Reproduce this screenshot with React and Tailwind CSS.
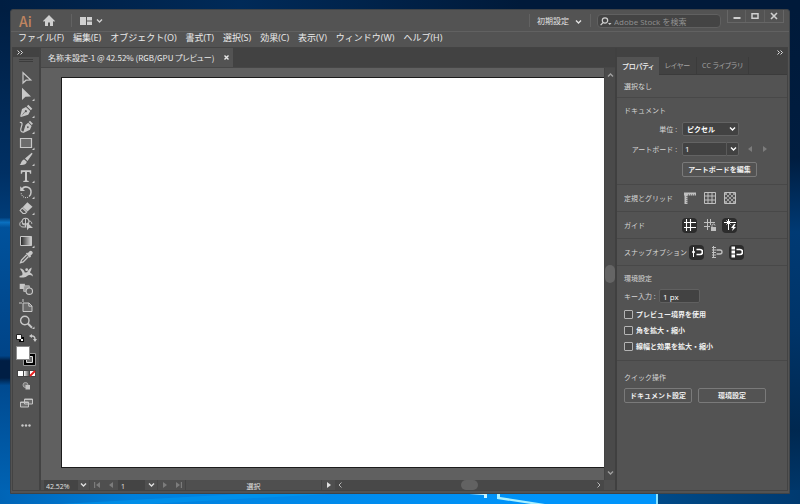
import React from "react";

const MENUS = ["ファイル(F)", "編集(E)", "オブジェクト(O)", "書式(T)", "選択(S)", "効果(C)", "表示(V)", "ウィンドウ(W)", "ヘルプ(H)"];

function Wallpaper() {
  return (
    <svg className="absolute inset-0 h-full w-full" viewBox="0 0 800 504" preserveAspectRatio="none" aria-hidden="true">
      <defs>
        <linearGradient id="top" x1="0" x2="1">
          <stop offset="0" stopColor="#001e42" />
          <stop offset="0.3" stopColor="#002a58" />
          <stop offset="0.65" stopColor="#001a3a" />
          <stop offset="1" stopColor="#001a3a" />
        </linearGradient>
        <linearGradient id="left" x1="0" x2="0" y1="0" y2="1">
          <stop offset="0" stopColor="#001e42" />
          <stop offset="0.33" stopColor="#003064" />
          <stop offset="0.42" stopColor="#003c78" />
          <stop offset="0.43" stopColor="#0a70c0" />
          <stop offset="0.44" stopColor="#00529c" />
          <stop offset="0.7" stopColor="#004488" />
          <stop offset="0.71" stopColor="#001e44" />
          <stop offset="0.745" stopColor="#001e44" />
          <stop offset="0.76" stopColor="#004a90" />
          <stop offset="1" stopColor="#0066b8" />
        </linearGradient>
        <linearGradient id="right" x1="0" x2="0" y1="0" y2="1">
          <stop offset="0" stopColor="#001a3a" />
          <stop offset="0.3" stopColor="#001d40" />
          <stop offset="0.45" stopColor="#003a74" />
          <stop offset="0.65" stopColor="#003468" />
          <stop offset="0.85" stopColor="#002850" />
          <stop offset="1" stopColor="#003a70" />
        </linearGradient>
        <linearGradient id="bottom" x1="0" x2="1">
          <stop offset="0" stopColor="#0064b6" />
          <stop offset="0.2" stopColor="#0080dc" />
          <stop offset="0.45" stopColor="#0088e8" />
          <stop offset="0.82" stopColor="#0094fa" />
        </linearGradient>
        <linearGradient id="bottomRight" x1="0" x2="1">
          <stop offset="0" stopColor="#004a88" />
          <stop offset="1" stopColor="#003a70" />
        </linearGradient>
      </defs>
      <rect width="800" height="504" fill="url(#top)" />
      <rect y="10" width="40" height="494" fill="url(#left)" />
      <rect x="760" y="10" width="40" height="494" fill="url(#right)" />
      <rect y="490" width="658" height="14" fill="url(#bottom)" />
      <rect x="658" y="490" width="142" height="14" fill="url(#bottomRight)" />
      <path d="M150 504L330 494H240L60 504Z" fill="#009cf4" opacity="0.5" />
      <path d="M455 493h32v5h-3v-3z" fill="#c8f4ff" />
      <path d="M497 493h3v4l45 7h-14l-34-5z" fill="#a8f0ff" />
      <rect x="656" y="490" width="2" height="14" fill="#8ce4ff" />
    </svg>
  );
}

function Chevron({ className = "" }) {
  return (
    <svg className={"h-[6px] w-[7px] " + className} viewBox="0 0 7 6" fill="none" stroke="currentColor" strokeWidth="1.4" aria-hidden="true">
      <path d="M1 1.6L3.5 4L6 1.6" />
    </svg>
  );
}

function TitleBar() {
  return (
    <header className="flex h-[21px] items-center pl-2 pr-[5px]">
      <span className="w-[12px] font-['Noto_Sans_CJK_JP',sans-serif] text-[14px] font-medium leading-none text-[#c08560]">Ai</span>
      <button aria-label="ホーム" className="ml-3 text-[#cfcfcf]">
        <svg className="h-[11px] w-[12px]" viewBox="0 0 12 11" fill="currentColor"><path d="M6 0L0 6l.9.8L2 5.9V11h3V7.5h2V11h3V5.9l1.100.9L12 6z" /></svg>
      </button>
      <span className="ml-4 h-[13px] w-px bg-[#626262]" />
      <button aria-label="ドキュメントレイアウト" className="ml-2 flex items-center gap-1 text-[#d0d0d0]">
        <svg className="h-[8px] w-[12px]" viewBox="0 0 12 8" fill="currentColor"><path d="M0 0h6v8H0zM7 0h5v3.5H7zM7 4.500h5V8H7z" /></svg>
        <Chevron />
      </button>
      <span className="ml-auto h-[13px] w-px bg-[#626262]" />
      <button className="ml-[7px] flex items-center gap-[6px] text-[8px] leading-none text-[#e2e2e2]">初期設定<Chevron className="mt-[3px]" /></button>
      <span className="ml-2 h-[13px] w-px bg-[#626262]" />
      <label className="ml-[6px] mt-px flex h-[14px] w-[124px] items-center rounded-sm border border-[#606060] bg-[#444444] pl-[2px]">
        <svg className="h-[9px] w-[12px] shrink-0 text-[#d0d0d0]" viewBox="0 0 12 9" fill="none" stroke="currentColor" strokeWidth="1.2" aria-hidden="true">
          <circle cx="5" cy="3.500" r="2.700" /><path d="M3.100 5.500L.6 8.200" /><path d="M8 6h3.500L9.750 8z" fill="currentColor" stroke="none" />
        </svg>
        <input aria-label="Adobe Stock を検索" placeholder="Adobe Stock を検索" className="ml-[2px] h-full w-full min-w-0 bg-transparent text-[8px] leading-none outline-none placeholder:text-[#929292]" />
      </label>
      <div className="ml-[6px] flex h-[13px] self-start border-x border-b border-[#666666] text-[#d0d0d0]">
        <button aria-label="最小化" className="grid w-[18px] place-items-center border-r border-[#606060]"><svg className="h-[8px] w-[8px]" viewBox="0 0 8 8"><path d="M.5 5h7v2h-7z" fill="currentColor" /></svg></button>
        <button aria-label="最大化" className="grid w-[19px] place-items-center border-r border-[#606060]"><svg className="h-[8px] w-[8px]" viewBox="0 0 8 8"><path d="M1 1.700h6v4.600H1z" fill="none" stroke="currentColor" strokeWidth="1.500" /></svg></button>
        <button aria-label="閉じる" className="grid w-[18px] place-items-center"><svg className="h-[8px] w-[8px]" viewBox="0 0 8 8"><path d="M1 1l6 6M7 1L1 7" fill="none" stroke="currentColor" strokeWidth="1.600" /></svg></button>
      </div>
    </header>
  );
}

const TOOLS = [
  ["選択ツール", false, <path d="M4 1.700v10.300l3-2.800 4.800-.2z" fill="none" stroke="currentColor" strokeWidth="1.200" />],
  ["ダイレクト選択ツール", true, <path d="M3 .8v12.200l3.500-3.200 5.500-.3z" />],
  ["ペンツール", true, <path fillRule="evenodd" d="M9.300.8l4 4-1.500 1.500-4-4zM7 2.900l4.200 4.200-2 3.600L2 13l-.8-.8L3 5zM6.800 6.100a1.100 1.100 0 1 0 .1 0zM2.200 12.300l3.600-3.800-.5-.4z" />],
  ["曲線ツール", true, <><path fillRule="evenodd" d="M11 .8l3 3-1.300 1.300-3-3zM9.200 2.700l3.400 3.300-1.600 3.700-6.200 3-.5-.5L6.500 5zM8.800 6.200a.9.900 0 1 0 .1 0z" /><path d="M.8 2.500C3.500 2 3.500 4 2.300 7S1.500 12.500 5 12" fill="none" stroke="currentColor" strokeWidth="1.200" /></>],
  ["長方形ツール", true, <path d="M1.500 2.500h11v9h-11z" fill="#6c6c6c" stroke="currentColor" strokeWidth="1.200" />],
  ["ブラシツール", true, <path d="M12.700.8l.9.9L8.500 9 6 6.600zM5.300 7.400l2.500 2.300C7.500 12.500 4 13.500.5 12.800c2-.8 1.500-5 4.800-5.400z" />],
  ["文字ツール", true, <path d="M1.800 1.300h10.400v3.500H11L10.500 3H8v8.500l1.700.4v1H4.300v-1l1.700-.4V3H3.500L3 4.800H1.800z" />],
  ["回転ツール", true, <><path d="M3 4a5 5 0 0 1 9 3.500a5 5 0 0 1-2 4" fill="none" stroke="currentColor" strokeWidth="1.500" /><path d="M1.200 1.300v4.700H6z" /><path d="M9 12.300A5 5 0 0 1 2.200 8" fill="none" stroke="currentColor" strokeWidth="1.100" strokeDasharray="1 1" /></>],
  ["消しゴムツール", true, <><path d="M8.300 1.200l5.200 4.500-5 4.900L3.700 6.200z" /><path d="M3.300 7L7.700 11 6.200 12.500H4L1.100 9.500z" fill="none" stroke="currentColor" strokeWidth="1.100" /></>],
  ["シェイプ形成ツール", false, <><circle cx="6.500" cy="4.600" r="3.400" fill="none" stroke="currentColor" strokeWidth="1.100" /><path d="M3 4C-.3 5.500.2 10 4 10h3.500M3 6.800h6.500M6.500 1.500V10M10 4c2 0 2.800 1.200 2.800 2.800" fill="none" stroke="currentColor" /><path d="M8 5.200v8l2-2.200h4z" /></>],
  ["グラデーションツール", true, <path d="M1.500 2.500h11v9h-11z" fill="url(#toolGradient)" stroke="currentColor" />],
  ["スポイトツール", false, <><path d="M8.700 3.200l1.800-1.900a2 2 0 0 1 2.800 2.800l-1.800 1.700.6.700-1.400 1.200L6.900 3.500l1.200-1z" /><path d="M7.700 4.700L2.500 10 1.500 12.700 4.200 12 9.500 6.500" fill="none" stroke="currentColor" strokeWidth="1.300" /></>],
  ["パペットワープツール", false, <><path d="M.8 2.500c3 0 4.500 2 5 4l2.200-.3C9 5 9.500 3 12.500 1.500c.5 2-1 3-1.500 5 1.500 1 3 1.500 2.800 4-2-1.800-4-1.800-6-.3-2.300 1.600-4.800 1.700-7.500 1l.5-1.400C3 10 3.500 9 3.500 7.800 3.300 5.500 1.800 4.500.8 2.500z" /><circle cx="7.700" cy="3.700" r="1.400" /></>],
  ["ブレンドツール", false, <><path d="M.7 1.800h5.200v5.200H.7z" /><path d="M4.700 3.800h5.600v5.600H4.700z" fill="#969696" stroke="currentColor" strokeWidth=".8" /><circle cx="10.300" cy="9.200" r="3.200" fill="#5c5c5c" stroke="currentColor" strokeWidth="1.100" /></>],
  ["アートボードツール", false, <><path d="M4 4h6l3 3v5.500H4z" fill="#6a6a6a" stroke="currentColor" /><path d="M0 4h3M4 0v3M9.800 4v3.200H13" fill="none" stroke="currentColor" /></>],
  ["ズームツール", true, <><circle cx="5.800" cy="5.500" r="4.200" fill="none" stroke="currentColor" strokeWidth="1.400" /><path d="M8.800 8.500l4.200 4.200" stroke="currentColor" strokeWidth="2" /></>],
];

function Toolbar() {
  return (
    <aside className="flex w-[28px] shrink-0 flex-col border-r-2 border-[#434343] text-[#c8c8c8]">
      <div className="flex h-[9px] items-center bg-[#424242] pl-1">
        <svg className="h-[5px] w-[6px]" viewBox="0 0 6 5" fill="none" stroke="#dddddd"><path d="M.5.500l2 2-2 2M3.500.500l2 2-2 2" /></svg>
      </div>
      <div className="mx-auto mb-2 mt-[2px] h-[3px] w-[14px] border-y border-[#3c3c3c]" />
      <div className="grid h-[260px] auto-rows-fr">
        {TOOLS.map(([name, more, icon]) => (
          <button key={name} aria-label={name} className="flex items-center justify-center">
            <svg className="ml-[2px] h-[14px] w-[16px]" viewBox="0 0 16 14" fill="currentColor">
              <defs><linearGradient id="toolGradient"><stop stopColor="#222222" /><stop offset="1" stopColor="#d8d8d8" /></linearGradient></defs>
              {icon}
              {more && <path d="M15.500 11.500v2.500H13z" />}
            </svg>
          </button>
        ))}
      </div>
      <div className="flex flex-col items-center">
        <div className="mt-1 flex w-[21px] items-center justify-between">
          <button aria-label="初期設定の塗りと線"><svg className="h-[8px] w-[8px]" viewBox="0 0 8 8"><path d="M3 3h5v5H3z" fill="#000000" /><path d="M.5.500h5v5h-5z" fill="#ffffff" stroke="#222222" /><path d="M5 5h2v2H5z" fill="#ffffff" /></svg></button>
          <button aria-label="塗りと線を入れ替え"><svg className="h-[8px] w-[8px]" viewBox="0 0 8 8" fill="currentColor"><path d="M2.500 2C5 1.800 6 3 6 5.500" fill="none" stroke="currentColor" strokeWidth="1.400" /><path d="M0 2L3 0v4zM4 5h4L6 8z" /></svg></button>
        </div>
        <button aria-label="塗りと線" className="mt-1 block">
          <svg className="h-[20px] w-[20px]" viewBox="0 0 20 20"><path d="M7.500 7.500h12v12h-12z" fill="#000000" stroke="#999999" /><path d="M10.500 10.500h6v6h-6z" fill="#6a6a6a" stroke="#dddddd" /><path d="M.5.500h13v13H.5z" fill="#ffffff" stroke="#8c8c8c" /></svg>
        </button>
        <button aria-label="カラー、グラデーション、なし" className="mt-[4px] block">
          <svg className="h-[7px] w-[19px]" viewBox="0 0 19 7"><path d="M0 0h19v7H0z" fill="#444444" /><path d="M1 1h5v5H1z" fill="#ffffff" /><path d="M7 1h5v5H7z" fill="url(#swatch)" /><path d="M13 1h5v5h-5z" fill="#ffffff" /><path d="M13 6l5-5" stroke="#e51c1c" strokeWidth="1.800" /><defs><linearGradient id="swatch"><stop stopColor="#ffffff" /><stop offset="1" stopColor="#555555" /></linearGradient></defs></svg>
        </button>
        <button aria-label="描画方法" className="mt-[5px] block">
          <svg className="h-[8px] w-[9px]" viewBox="0 0 9 8"><circle cx="3.500" cy="3" r="2.500" fill="#777777" stroke="#a8a8a8" /><path d="M3.500 3h4.500v4.500H3.500z" fill="#c4c4c4" /></svg>
        </button>
        <button aria-label="スクリーンモード" className="mt-2 block">
          <svg className="h-[10px] w-[13px]" viewBox="0 0 13 10" fill="#6a6a6a" stroke="#c4c4c4"><path d="M4.500 1h8v5h-8zM.5 4h8v5h-8z" /><path d="M4.500 1.500h8M.5 4.500h8" /></svg>
        </button>
        <button aria-label="ツールバーを編集" className="mt-4 block">
          <svg className="h-[3px] w-[10px]" viewBox="0 0 10 3" fill="currentColor"><circle cx="1.500" cy="1.500" r="1.200" /><circle cx="5" cy="1.500" r="1.200" /><circle cx="8.500" cy="1.500" r="1.200" /></svg>
        </button>
      </div>
    </aside>
  );
}

function Step({ label, d }) {
  return (
    <button aria-label={label} className="text-[#7c7c7c]">
      <svg className="h-[6px] w-[7px]" viewBox="0 0 7 6" fill="currentColor"><path d={d} /></svg>
    </button>
  );
}

function StatusBar() {
  return (
    <footer className="flex h-[10px] items-stretch bg-[#4f4f4f] pl-[3px] text-[7px] leading-none text-[#e0e0e0]">
      <input aria-label="ズーム" defaultValue="42.52%" className="w-[34px] bg-[#444444] pl-[2px] pt-[3px]" />
      <button aria-label="ズームレベル" className="grid w-[12px] place-items-center border-r border-[#474747]"><Chevron /></button>
      <div className="flex w-[28px] items-center justify-around">
        <Step label="最初" d="M0 0h1.200v6H0zM6 0v6L2 3z" />
        <Step label="前へ" d="M5 0v6L1 3z" />
      </div>
      <input aria-label="アートボード番号" defaultValue="1" className="w-[27px] bg-[#444444] pl-[3px] pt-[3px]" />
      <button aria-label="アートボードを選択" className="grid w-[13px] place-items-center border-r border-[#474747]"><Chevron /></button>
      <div className="flex w-[28px] items-center justify-around border-r border-[#454545]">
        <Step label="次へ" d="M2 0v6l4-3z" />
        <Step label="最後" d="M5.800 0H7v6H5.800zM1 0v6l4-3z" />
      </div>
      <span className="w-[136px] border-r border-[#454545] pt-[3px] text-center">選択</span>
      <button aria-label="表示項目" className="grid w-[13px] place-items-center"><svg className="h-[6px] w-[5px]" viewBox="0 0 5 6" fill="currentColor"><path d="M1 0v6l4-3z" /></svg></button>
      <div className="flex min-w-0 flex-1 items-center bg-[#484848] px-[3px] text-[#b8b8b8]">
        <svg className="h-[6px] w-[4px]" viewBox="0 0 4 6" fill="none" stroke="currentColor"><path d="M3.500.500L1 3l2.500 2.500" /></svg>
        <span className="flex-1" />
        <span className="h-[10px] w-[17px] rounded-full bg-[#626262]" />
        <span className="flex-1" />
        <svg className="h-[6px] w-[4px]" viewBox="0 0 4 6" fill="none" stroke="currentColor"><path d="M.5.500L3 3 .5 5.500" /></svg>
      </div>
      <span className="w-[11px]" />
    </footer>
  );
}

function Workspace() {
  return (
    <main className="flex min-w-0 flex-1 flex-col">
      <div className="flex h-[20px] border-b border-[#474747] bg-[#424242]">
        <div className="flex items-center gap-[10px] bg-[#535353] pl-[7px] pr-1 font-['Noto_Sans_CJK_JP',sans-serif] text-[8px] leading-none text-[#eaeaea]">
          <span className="whitespace-nowrap [font-feature-settings:'palt']">名称未設定-1 @ 42.52% (RGB/GPU プレビュー)</span>
          <button aria-label="ドキュメントを閉じる"><svg className="h-[5px] w-[5px]" viewBox="0 0 5 5" stroke="currentColor" strokeWidth="1.400"><path d="M.5.500l4 4M4.500.500l-4 4" /></svg></button>
        </div>
      </div>
      <div className="flex min-h-0 flex-1">
        <div className="flex flex-1 bg-[#606060] pb-3 pl-5 pt-[9px]">
          <div className="flex-1 border-y border-l border-[#1c1c1c] bg-white" />
        </div>
        <div className="flex w-[11px] flex-col items-center border-l border-[#444444] bg-[#4a4a4a] py-1 text-[#a0a0a0]">
          <Chevron className="rotate-180" />
          <span className="flex-1" />
          <span className="h-[18px] w-[10px] rounded-full bg-[#656565]" />
          <span className="flex-1" />
          <Chevron />
        </div>
      </div>
      <StatusBar />
    </main>
  );
}

function Section({ children, className = "" }) {
  return <section className={"border-b border-[#484848] px-[7px] " + className}>{children}</section>;
}

function Tile({ label, on, children }) {
  return (
    <button aria-label={label} aria-pressed={Boolean(on)} className={"grid h-[15px] w-[15px] place-items-center rounded-sm " + (on ? "bg-[#2c2c2c] text-white" : "text-[#c0c0c0]")}>
      <svg className="h-[12px] w-[12px]" viewBox="0 0 12 12" fill="none" stroke="currentColor">{children}</svg>
    </button>
  );
}

function PanelButton({ children, className = "" }) {
  return <button className={"h-[15px] rounded-[2px] border border-[#7a7a7a] text-center font-bold leading-none text-[#f0f0f0] " + className}>{children}</button>;
}

const magnet = <path d="M5.500 3.500H9a2.500 2.500 0 0 1 0 5H5.500" strokeWidth="1.700" />;

function Check({ children }) {
  return (
    <label className="flex h-4 items-center gap-[3px] font-bold text-[#f0f0f0]">
      <input type="checkbox" className="h-[9px] w-[9px] appearance-none rounded-[1px] border border-[#b4b4b4] bg-[#4a4a4a] checked:bg-[#b4b4b4]" />
      {children}
    </label>
  );
}

function Properties() {
  return (
    <aside className="flex w-[172px] shrink-0 flex-col border-l-2 border-[#404040] text-[7px] leading-none text-[#d6d6d6]">
      <div className="flex h-[9px] items-center justify-end bg-[#424242] pr-1">
        <svg className="h-[5px] w-[6px]" viewBox="0 0 6 5" fill="none" stroke="#dddddd"><path d="M.5.500l2 2-2 2M3.500.500l2 2-2 2" /></svg>
      </div>
      <div role="tablist" className="flex h-[18px] bg-[#424242] text-[#a4a4a4] [font-feature-settings:'palt']">
        <button role="tab" aria-selected="true" className="w-[42px] whitespace-nowrap bg-[#535353] font-medium text-[#f2f2f2]">プロパティ</button>
        <button role="tab" aria-selected="false" className="w-[38px] whitespace-nowrap border-b border-r border-[#3b3b3b]">レイヤー</button>
        <button role="tab" aria-selected="false" className="w-[52px] whitespace-nowrap border-b border-r border-[#3b3b3b]">CC ライブラリ</button>
        <span className="flex-1 border-b border-[#3b3b3b]" />
      </div>
      <Section className="flex h-[23px] items-center">選択なし</Section>
      <Section className="h-[87px] pt-[9px]">
        <h2>ドキュメント</h2>
        <div className="mt-2 grid grid-cols-[53px_1fr] items-center gap-x-[5px] gap-y-[6px]">
          <label htmlFor="unit" className="text-right">単位 :</label>
          <div className="relative w-[57px]">
            <select id="unit" className="block h-[14px] w-full appearance-none rounded-[2px] border border-[#636363] bg-[#424242] pl-1 font-bold text-white"><option>ピクセル</option></select>
            <Chevron className="pointer-events-none absolute right-[3px] top-1 text-white" />
          </div>
          <label htmlFor="board" className="whitespace-nowrap text-right">アートボード :</label>
          <div className="flex items-center">
            <div className="relative w-[57px]">
              <select id="board" className="block h-[14px] w-full appearance-none rounded-[2px] border border-[#636363] bg-[#424242] pl-[2px] text-[8px] text-white"><option>1</option></select>
              <span className="pointer-events-none absolute inset-y-0 right-0 grid w-[13px] place-items-center border-l border-[#5a5a5a] text-white"><Chevron /></span>
            </div>
            <div className="ml-2 flex gap-[7px]">
              <Step label="前のアートボード" d="M5 0v6L1 3z" />
              <Step label="次のアートボード" d="M2 0v6l4-3z" />
            </div>
          </div>
          <PanelButton className="col-start-2 w-[75px]">アートボードを編集</PanelButton>
        </div>
      </Section>
      <Section className="flex h-[27px] items-center">
        <span className="w-[58px]">定規とグリッド</span>
        <div className="flex gap-[5px]">
          <Tile label="定規"><path d="M0 2h12M2 1v11" strokeWidth="3" /><path d="M4 3h8M3 4v8" stroke="#535353" strokeDasharray="1 1" /></Tile>
          <Tile label="グリッド"><path d="M.5.500h11v11H.5zM4 0v12M8 0v12M0 4h12M0 8h12" /></Tile>
          <Tile label="透明グリッド"><path d="M.5.500h11v11H.5z" /><path d="M1 2h10M1 6h10M1 10h10" strokeWidth="2" strokeDasharray="2 2" opacity=".7" /><path d="M1 4h10M1 8h10" strokeWidth="2" strokeDasharray="2 2" strokeDashoffset="2" opacity=".7" /></Tile>
        </div>
      </Section>
      <Section className="flex h-[27px] items-center">
        <span className="w-[58px]">ガイド</span>
        <div className="flex gap-[5px]">
          <Tile label="ガイドを表示" on><path d="M2.500 0v12M6.500 0v12M0 3.500h12M0 8.500h12" strokeWidth="1.100" /></Tile>
          <Tile label="ガイドをロック"><path d="M3.500 0v11M6.500 0v6M0 3.500h11M0 7.500h6" /><path d="M7 8h5v4H7z" fill="currentColor" stroke="none" /><path d="M8 8V6.500a1.500 1.500 0 0 1 3 0" /></Tile>
          <Tile label="スマートガイド" on><path d="M4.500 0v11M0 3.500h12M2.500 1.500l4 4M6.500 1.500L2.500 5.500" /><path d="M10 5L7 9h2l-1 3 4-4h-2l1.500-3z" fill="currentColor" stroke="none" /></Tile>
        </div>
      </Section>
      <Section className="flex h-[27px] items-center">
        <span className="w-[65px] whitespace-nowrap">スナップオプション</span>
        <div className="flex gap-[5px]">
          <Tile label="ポイントにスナップ" on><path d="M2.500 1v10" /><circle cx="2.500" cy="6" r="1" fill="currentColor" />{magnet}</Tile>
          <Tile label="グリッドにスナップ"><path d="M1 1.500h4M1 4h4M1 6.500h4M1 9h4M1 11.500h4M2.500 0v12" /><path d="M5.500 4H9a2 2 0 0 1 0 4H5.500" strokeWidth="1.300" /></Tile>
          <Tile label="ピクセルにスナップ" on><path d="M.5.500H4v3H.5zM.5 4.500H4v3H.5zM.5 8.500H4v3H.5z" fill="currentColor" stroke="none" />{magnet}</Tile>
        </div>
      </Section>
      <Section className="h-[95px] pt-[9px]">
        <h2>環境設定</h2>
        <div className="mb-[3px] mt-[7px] flex items-center">
          <label htmlFor="key" className="w-[35px] whitespace-nowrap">キー入力 :</label>
          <input id="key" defaultValue="1 px" className="h-[14px] w-[41px] rounded-[2px] border border-[#606060] bg-[#424242] pl-[3px] text-[8px] text-white" />
        </div>
        <Check>プレビュー境界を使用</Check>
        <Check>角を拡大・縮小</Check>
        <Check>線幅と効果を拡大・縮小</Check>
      </Section>
      <section className="px-[7px] pt-[13px]">
        <h2>クイック操作</h2>
        <div className="mt-[7px] flex gap-[6px]">
          <PanelButton className="w-[68px]">ドキュメント設定</PanelButton>
          <PanelButton className="w-[68px]">環境設定</PanelButton>
        </div>
      </section>
    </aside>
  );
}

export default function App() {
  return (
    <div lang="ja" className="relative flex h-screen overflow-hidden bg-[#001a3a] px-[10px] pb-[10px] pt-[9px] font-['Open_Sans','Noto_Sans_CJK_JP',sans-serif]">
      <Wallpaper />
      <div className="relative flex min-w-0 flex-1 flex-col rounded-t-[3px] border border-[#3f4347] bg-[#535353]">
        <TitleBar />
        <nav className="flex h-[16px] items-center gap-[9px] border-t border-[#616161] pb-1 pl-[7px] text-[9px] leading-none text-[#eaeaea]">
          {MENUS.map((m) => <button key={m} className="whitespace-nowrap">{m}</button>)}
        </nav>
        <div className="mx-px mb-[2px] flex min-h-0 flex-1 border border-[#434343]">
          <Toolbar />
          <Workspace />
          <Properties />
        </div>
      </div>
    </div>
  );
}
